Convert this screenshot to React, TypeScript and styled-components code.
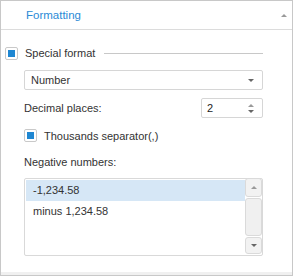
import styled, { createGlobalStyle } from 'styled-components';

const GlobalStyle = createGlobalStyle`
  html, body {
    margin: 0;
    padding: 0;
    background: #ffffff;
  }
  body {
    font-family: "Liberation Sans", Arial, sans-serif;
    font-size: 11px;
    color: #333333;
  }
`;

const Panel = styled.div`
  width: 293px;
  height: 276px;
  box-sizing: border-box;
  border: 1px solid #c8c8c8;
  display: flex;
  flex-direction: column;
  background: #ffffff;
`;

const Header = styled.div`
  height: 29px;
  flex-shrink: 0;
  box-sizing: border-box;
  border-bottom: 1px solid #dcdcdc;
  padding: 0 5px 0 25px;
  display: flex;
  align-items: center;
  justify-content: space-between;
  color: #2b8ad6;
  font-size: 11.5px;
`;

const Body = styled.div`
  flex: 1;
  padding: 17px 29px 0 4px;
  display: flex;
  flex-direction: column;
`;

const Footer = styled.div`
  height: 3px;
  flex-shrink: 0;
  background: #f0f0f0;
`;

const SectionRow = styled.div`
  display: flex;
  align-items: center;
  height: 13px;
`;

const SectionTitle = styled.span`
  margin-left: 7px;
  white-space: nowrap;
  line-height: 13px;
`;

const Rule = styled.div`
  flex: 1;
  height: 1px;
  background: #c8c8c8;
  margin-left: 9px;
`;

const Box = styled.span`
  width: 13px;
  height: 13px;
  flex-shrink: 0;
  box-sizing: border-box;
  border: 1px solid #c9c9c9;
  border-radius: 2px;
  background: #ffffff;
  display: flex;
  align-items: center;
  justify-content: center;
`;

const Tick = styled.span`
  width: 7px;
  height: 7px;
  background: #1f87d2;
`;

const Indented = styled.div<{ $top: number }>`
  margin-left: 19px;
  margin-top: ${(p) => p.$top}px;
`;

const Select = styled.div`
  height: 20px;
  box-sizing: border-box;
  border: 1px solid #d6d6d6;
  border-radius: 2px;
  display: flex;
  align-items: center;
  justify-content: space-between;
  padding: 0 8px 0 6px;
`;

const Caret = styled.span<{ $up?: boolean }>`
  width: 0;
  height: 0;
  border-left: 3px solid transparent;
  border-right: 3px solid transparent;
  ${(p) => (p.$up ? 'border-bottom' : 'border-top')}: 3px solid ${(p) => (p.$up ? '#9a9a9a' : '#666666')};
`;

const FieldRow = styled.div`
  display: flex;
  align-items: center;
  justify-content: space-between;
  height: 20px;
`;

const Spin = styled.div`
  width: 62px;
  height: 20px;
  box-sizing: border-box;
  border: 1px solid #d6d6d6;
  border-radius: 2px;
  display: flex;
  align-items: center;
  justify-content: space-between;
  padding: 0 8px 0 5px;
  color: #222222;
`;

const SpinArrows = styled.span`
  display: flex;
  flex-direction: column;
  gap: 3px;
`;

const CheckRow = styled.div`
  display: flex;
  align-items: center;
  gap: 7px;
  height: 13px;
`;

const Label = styled.div`
  line-height: 14px;
`;

const ListBox = styled.div`
  height: 78px;
  box-sizing: border-box;
  border: 1px solid #d9d9d9;
  border-radius: 2px;
  display: flex;
`;

const Rows = styled.div`
  flex: 1;
  padding: 1px 0 0 1px;
`;

const Row = styled.div<{ $selected?: boolean }>`
  height: 21px;
  line-height: 21px;
  padding-left: 7px;
  background: ${(p) => (p.$selected ? '#d6e7f6' : 'transparent')};
`;

const ScrollBar = styled.div`
  width: 17px;
  display: flex;
  flex-direction: column;
  gap: 1px;
  padding: 0 0 1px 0;
  margin-top: -1px;
`;

const ScrollButton = styled.div<{ $h: number }>`
  height: ${(p) => p.$h}px;
  box-sizing: border-box;
  border: 1px solid #dadada;
  border-radius: 3px;
  background: #f2f2f2;
  display: flex;
  align-items: center;
  justify-content: center;
`;

const Thumb = styled.div`
  flex: 1;
  box-sizing: border-box;
  border: 1px solid #dadada;
  border-radius: 3px;
  background: #f0f0f0;
`;

const Spacer = styled.div`
  flex: 1;
`;

export default function App() {
  return (
    <>
      <GlobalStyle />
      <Panel>
        <Header>
          <span>Formatting</span>
          <Caret $up />
        </Header>
        <Body>
          <SectionRow>
            <Box>
              <Tick />
            </Box>
            <SectionTitle>Special format</SectionTitle>
            <Rule />
          </SectionRow>
          <Indented $top={10}>
            <Select>
              <span>Number</span>
              <Caret />
            </Select>
          </Indented>
          <Indented $top={8}>
            <FieldRow>
              <span>Decimal places:</span>
              <Spin>
                <span>2</span>
                <SpinArrows>
                  <Caret $up />
                  <Caret />
                </SpinArrows>
              </Spin>
            </FieldRow>
          </Indented>
          <Indented $top={11}>
            <CheckRow>
              <Box>
                <Tick />
              </Box>
              <span>Thousands separator(,)</span>
            </CheckRow>
          </Indented>
          <Indented $top={13}>
            <Label>Negative numbers:</Label>
          </Indented>
          <Indented $top={9}>
            <ListBox>
              <Rows>
                <Row $selected>-1,234.58</Row>
                <Row>minus 1,234.58</Row>
              </Rows>
              <ScrollBar>
                <ScrollButton $h={19}>
                  <Caret $up />
                </ScrollButton>
                <Thumb />
                <ScrollButton $h={17}>
                  <Caret />
                </ScrollButton>
              </ScrollBar>
            </ListBox>
          </Indented>
          <Spacer />
        </Body>
        <Footer />
      </Panel>
    </>
  );
}
